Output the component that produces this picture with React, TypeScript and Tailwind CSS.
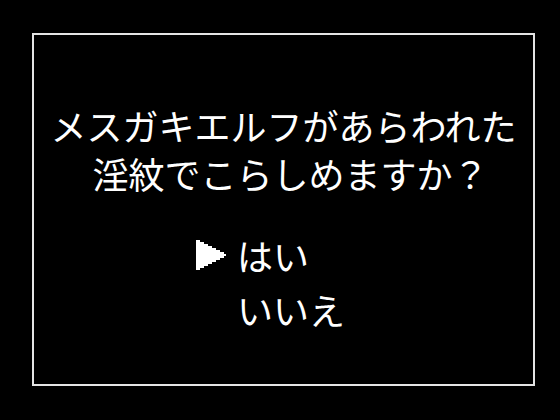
import React from 'react';

const font = { fontFamily: '"Noto Sans CJK JP", "Noto Sans", sans-serif' };

// Stepped cursor triangle drawn on a 2px grid
function Cursor() {
  return (
    <svg width="30" height="30" viewBox="0 0 30 30" shapeRendering="crispEdges" className="shrink-0">
      <polygon
        fill="#fff"
        points="0,0 4,0 4,2 8,2 8,4 12,4 12,6 16,6 16,8 20,8 20,10 24,10 24,12 28,12 28,14 30,14 30,16 28,16 28,18 24,18 24,20 20,20 20,22 16,22 16,24 12,24 12,26 8,26 8,28 4,28 4,30 0,30"
      />
    </svg>
  );
}

export default function App() {
  const choices = ['はい', 'いいえ'];
  const selected = 0;

  return (
    <div className="w-[560px] h-[420px] bg-black overflow-hidden pt-[33px] pl-[32px]" style={font}>
      <div className="w-[503px] h-[353px] border-2 border-[#e4e4e4] flex flex-col items-center pt-[66px]">
        <div className="text-white text-[36px] leading-[48px] text-center tracking-[0px]">
          <p>メスガキエルフがあらわれた</p>
          <p className="pl-[14px]">淫紋でこらしめますか？</p>
        </div>

        <div className="self-stretch pl-[162px] mt-[34px] flex flex-col gap-[6px]">
          {choices.map((c, i) => (
            <div key={c} className="flex items-center h-[48px]">
              <div className="w-[30px] mr-[11px] flex items-center">
                {i === selected && <Cursor />}
              </div>
              <span className="text-white text-[36px] leading-[48px]">{c}</span>
            </div>
          ))}
        </div>
      </div>
    </div>
  );
}
